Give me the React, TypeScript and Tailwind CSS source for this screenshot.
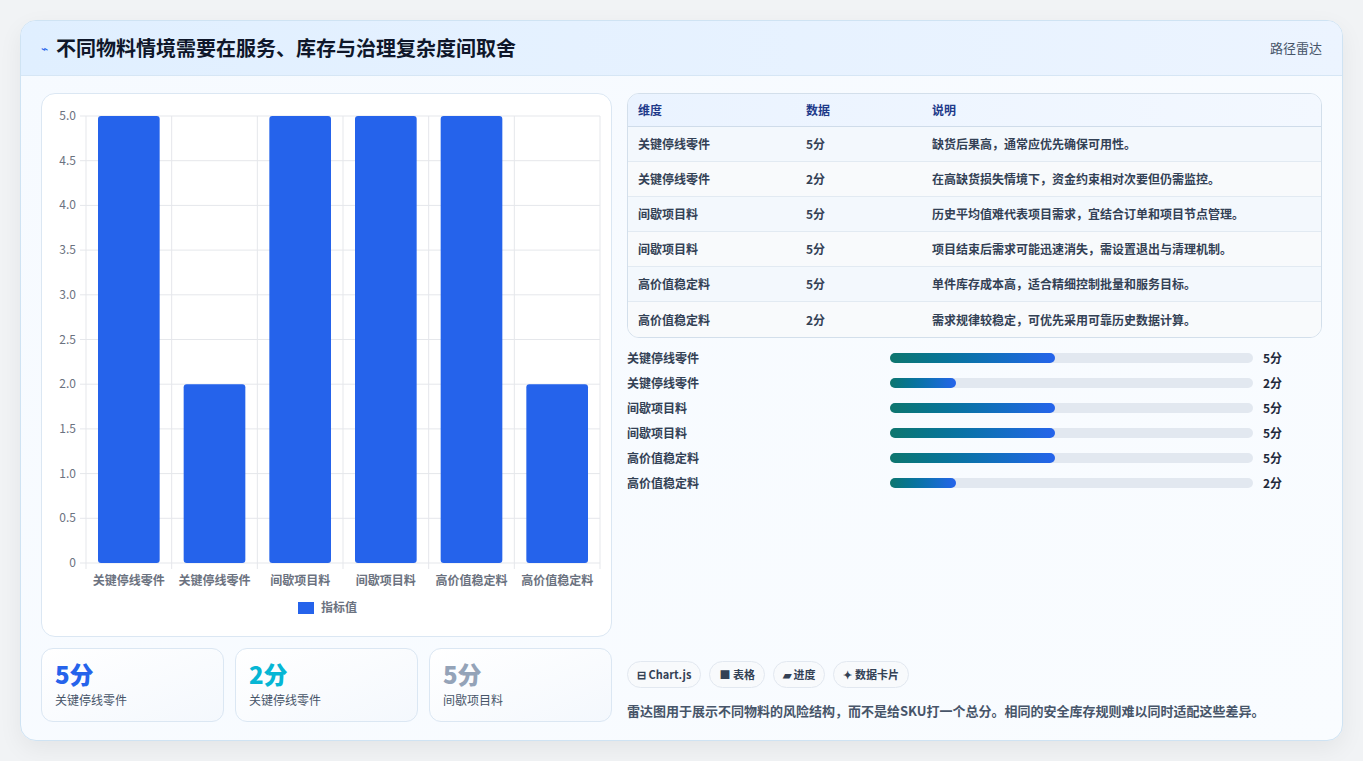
import React from "react";

const font = { fontFamily: '"Noto Sans CJK SC", "Noto Sans", sans-serif' };
const cats = ["关键停线零件", "关键停线零件", "间歇项目料", "间歇项目料", "高价值稳定料", "高价值稳定料"];
const vals = [5, 2, 5, 5, 5, 2];
const rows = [
  ["关键停线零件", "5分", "缺货后果高，通常应优先确保可用性。"],
  ["关键停线零件", "2分", "在高缺货损失情境下，资金约束相对次要但仍需监控。"],
  ["间歇项目料", "5分", "历史平均值难代表项目需求，宜结合订单和项目节点管理。"],
  ["间歇项目料", "5分", "项目结束后需求可能迅速消失，需设置退出与清理机制。"],
  ["高价值稳定料", "5分", "单件库存成本高，适合精细控制批量和服务目标。"],
  ["高价值稳定料", "2分", "需求规律较稳定，可优先采用可靠历史数据计算。"],
];

function Chart() {
  const x0 = 44, x1 = 558, yTop = 22, yBot = 469;
  const w = (x1 - x0) / 6;
  const ticks = [0, 0.5, 1, 1.5, 2, 2.5, 3, 3.5, 4, 4.5, 5];
  return (
    <svg width="570" height="542" style={font}>
      {ticks.map((t) => {
        const y = yBot - (t / 5) * (yBot - yTop);
        return (
          <g key={t}>
            <line x1={x0 - 6} x2={x1} y1={y} y2={y} stroke="#e5e7eb" />
            <text x={x0 - 10} y={y + 4} fontSize="12" fill="#6b7280" textAnchor="end">
              {t === 0 ? "0" : t.toFixed(1)}
            </text>
          </g>
        );
      })}
      {Array.from({ length: 7 }).map((_, i) => (
        <line key={i} x1={x0 + i * w} x2={x0 + i * w} y1={yTop} y2={yBot + 6} stroke="#e5e7eb" />
      ))}
      {vals.map((v, i) => {
        const h = (v / 5) * (yBot - yTop);
        return <rect key={i} x={x0 + i * w + 12} y={yBot - h} width={w - 24} height={h} rx="3" fill="#2563eb" />;
      })}
      {cats.map((c, i) => (
        <text key={i} x={x0 + i * w + w / 2} y={yBot + 22} fontSize="12" fill="#6b7280" textAnchor="middle" fontWeight="600">
          {c}
        </text>
      ))}
      <rect x="256" y="508" width="16" height="12" fill="#2563eb" />
      <text x="279" y="518" fontSize="12" fill="#6b7280" fontWeight="600">指标值</text>
    </svg>
  );
}

export default function App() {
  return (
    <div className="min-h-screen bg-[#f1f3f5] p-5" style={font}>
      <div className="rounded-[16px] border border-[#cfe3f3] bg-gradient-to-br from-[#f6faff] to-[#f9fcff] shadow-[0_8px_24px_rgba(0,0,0,0.06)] overflow-hidden">
        <div className="h-[55px] px-5 flex items-center justify-between bg-gradient-to-r from-[#e0efff] to-[#ecf4ff] border-b border-[#d6e6f5]">
          <div className="flex items-center gap-2">
            <span className="text-[#2563eb] text-xs">⌁</span>
            <span className="text-[20px] font-bold text-[#0f172a]">不同物料情境需要在服务、库存与治理复杂度间取舍</span>
          </div>
          <span className="text-[13px] text-[#475569]">路径雷达</span>
        </div>
        <div className="flex gap-[15px] px-5 pt-[17px] pb-[18px]">
          <div className="w-[571px] flex flex-col gap-[11px]">
            <div className="h-[544px] bg-white rounded-[14px] border border-[#dbe7f3]">
              <Chart />
            </div>
            <div className="grid grid-cols-3 gap-[11px]">
              {[
                ["5分", "text-[#2563eb]", "关键停线零件"],
                ["2分", "text-[#06b6d4]", "关键停线零件"],
                ["5分", "text-[#94a3b8]", "间歇项目料"],
              ].map(([v, c, l], i) => (
                <div key={i} className="h-[74px] rounded-[12px] border border-[#dbe7f3] bg-gradient-to-br from-white to-[#f4f8fd] px-[13px] pt-[10px]">
                  <div className={`text-[24px] font-extrabold leading-[30px] ${c}`}>{v}</div>
                  <div className="text-[12px] text-[#475569] mt-[2px]">{l}</div>
                </div>
              ))}
            </div>
          </div>
          <div className="flex-1 flex flex-col">
            <div className="rounded-[12px] border border-[#d3dfeb] overflow-hidden">
              <div className="grid grid-cols-[168px_126px_1fr] h-[33px] items-center px-[10px] bg-gradient-to-r from-[#eaf3ff] to-[#f3f8ff] border-b border-[#cfdcea] text-[12px] font-bold text-[#1e3a8a]">
                <span>维度</span><span>数据</span><span>说明</span>
              </div>
              {rows.map((r, i) => (
                <div key={i} className={`grid grid-cols-[168px_126px_1fr] h-[35px] items-center px-[10px] text-[12px] font-semibold text-[#334155] ${i < 5 ? "border-b border-[#e2eaf2]" : ""} ${i % 2 === 0 ? "bg-[#f3f8fd]" : "bg-[#f8fafc]"}`}>
                  <span>{r[0]}</span><span>{r[1]}</span><span>{r[2]}</span>
                </div>
              ))}
            </div>
            <div className="flex flex-col gap-[7px] mt-[11px]">
              {rows.map((r, i) => (
                <div key={i} className="flex items-center h-[18px] text-[12px] font-semibold text-[#334155]">
                  <span className="w-[263px]">{r[0]}</span>
                  <div className="w-[363px] h-[10px] rounded-full bg-[#e2e8f0]">
                    <div className="h-full rounded-full bg-gradient-to-r from-[#0f766e] to-[#2563eb]" style={{ width: r[1] === "5分" ? "45.5%" : "18.2%" }} />
                  </div>
                  <span className="ml-[10px] font-bold text-[#1e293b]">{r[1]}</span>
                </div>
              ))}
            </div>
            <div className="flex-1" />
            <div className="flex gap-[8px] mb-[13px]">
              {["⊟ Chart.js", "■ 表格", "▰ 进度", "✦ 数据卡片"].map((t) => (
                <span key={t} className="h-[27px] px-[9px] flex items-center rounded-full border border-[#e2e8f0] bg-[#f8fafc] text-[11px] font-bold text-[#334155]">{t}</span>
              ))}
            </div>
            <div className="text-[13px] text-[#475569] font-semibold mb-[2px]">雷达图用于展示不同物料的风险结构，而不是给SKU打一个总分。相同的安全库存规则难以同时适配这些差异。</div>
          </div>
        </div>
      </div>
    </div>
  );
}
